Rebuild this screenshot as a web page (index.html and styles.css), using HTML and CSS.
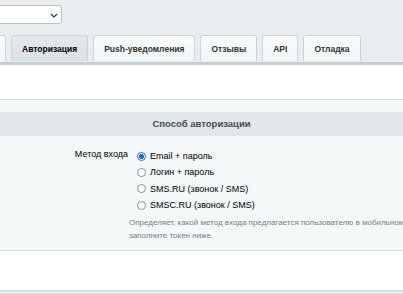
FILE: index.html
```html
<!DOCTYPE html>
<html lang="ru">
  <head>
    <meta charset="utf-8" />
    <title>Авторизация</title>
    <link rel="stylesheet" href="styles.css">
  </head>
  <body>
    <div class="top">
      <div class="site-select">
        <svg class="chevron" width="8" height="5" viewBox="0 0 8 5"><path d="M1 1l3 3 3-3" fill="none" stroke="#333" stroke-width="1.2"/></svg>
      </div>
    </div>
    <div class="tabs">
      <div class="tab tab-cut"></div>
      <div class="tab active">Авторизация</div>
      <div class="tab">Push-уведомления</div>
      <div class="tab">Отзывы</div>
      <div class="tab">API</div>
      <div class="tab">Отладка</div>
    </div>
    <div class="panel">
      <div class="spacer"></div>
      <div class="section">
        <div class="section-title">Способ авторизации</div>
        <div class="field">
          <div class="field-label">Метод входа</div>
          <div class="field-value">
            <label class="radio"><span class="dot checked"></span>Email + пароль</label>
            <label class="radio"><span class="dot"></span>Логин + пароль</label>
            <label class="radio"><span class="dot"></span>SMS.RU (звонок / SMS)</label>
            <label class="radio"><span class="dot"></span>SMSC.RU (звонок / SMS)</label>
            <div class="hint">Определяет, какой метод входа предлагается пользователю в мобильном приложении. Для SMS-методов<br>заполните токен ниже.</div>
          </div>
        </div>
      </div>
      <div class="bottom"></div>
    </div>
  </body>
</html>
```
FILE: styles.css
```css
* {
  box-sizing: border-box;
}

body {
  margin: 0;
  width: 403px;
  height: 294px;
  overflow: hidden;
  background: linear-gradient(#e9eef0, #e2e9ec);
  font-family: "Liberation Sans", Arial, sans-serif;
  color: #000;
}

.top {
  height: 35px;
  padding-top: 5px;
}

.site-select {
  width: 72px;
  height: 19px;
  margin-left: -10px;
  background: #fff;
  border: 1px solid #b8c1c5;
  border-radius: 3px;
  position: relative;
}

.chevron {
  position: absolute;
  right: 3px;
  top: 7px;
}

.tabs {
  display: flex;
  gap: 5px;
  height: 26px;
  margin-left: -40px;
}

.tab {
  height: 26px;
  padding: 0 10px;
  line-height: 27px;
  font-size: 8.5px;
  font-weight: bold;
  color: #333;
  background: linear-gradient(#fbfcfc, #f2f5f6);
  border: 1px solid #cdd4d7;
  border-bottom: none;
  border-radius: 3px 3px 0 0;
}

.tab-cut {
  width: 46px;
}

.tab.active {
  color: #000;
  background: linear-gradient(#e3e9eb, #d9e1e4);
}

.panel {
  background: #fff;
  border-top: 3px solid #c6ced1;
  margin-top: 1px;
}

.spacer {
  height: 35px;
  border-bottom: 1px solid #d5dbde;
}

.section {
  background: #f4f8f9;
  padding-top: 12px;
  height: 151px;
  overflow: hidden;
  border-bottom: 1px solid #d5dde0;
}

.section-title {
  height: 24px;
  line-height: 24px;
  background: #e1e7e9;
  text-align: center;
  font-size: 9.5px;
  font-weight: bold;
  color: #434e53;
}

.field {
  display: flex;
  padding-top: 12px;
}

.field-label {
  flex: none;
  width: 128px;
  text-align: right;
  font-size: 9px;
  color: #000;
  padding-top: 1px;
}

.field-value {
  flex: 1;
  padding-left: 1px;
  white-space: nowrap;
}

.radio {
  display: flex;
  align-items: center;
  height: 16.3px;
  font-size: 9px;
  color: #000;
  margin-left: 8px;
}

.dot {
  width: 9px;
  height: 9px;
  border: 1px solid #8a8f92;
  border-radius: 50%;
  background: #fff;
  margin-right: 4px;
}

.dot.checked {
  border: 1px solid #1f6fe0;
  background: radial-gradient(circle, #1f6fe0 2.3px, #fff 2.8px);
}

.hint {
  font-size: 8px;
  color: #777f83;
  line-height: 12.5px;
  padding-top: 4px;
}

.bottom {
  height: 40px;
  border-bottom: 1px solid #d2d9dc;
}
```
